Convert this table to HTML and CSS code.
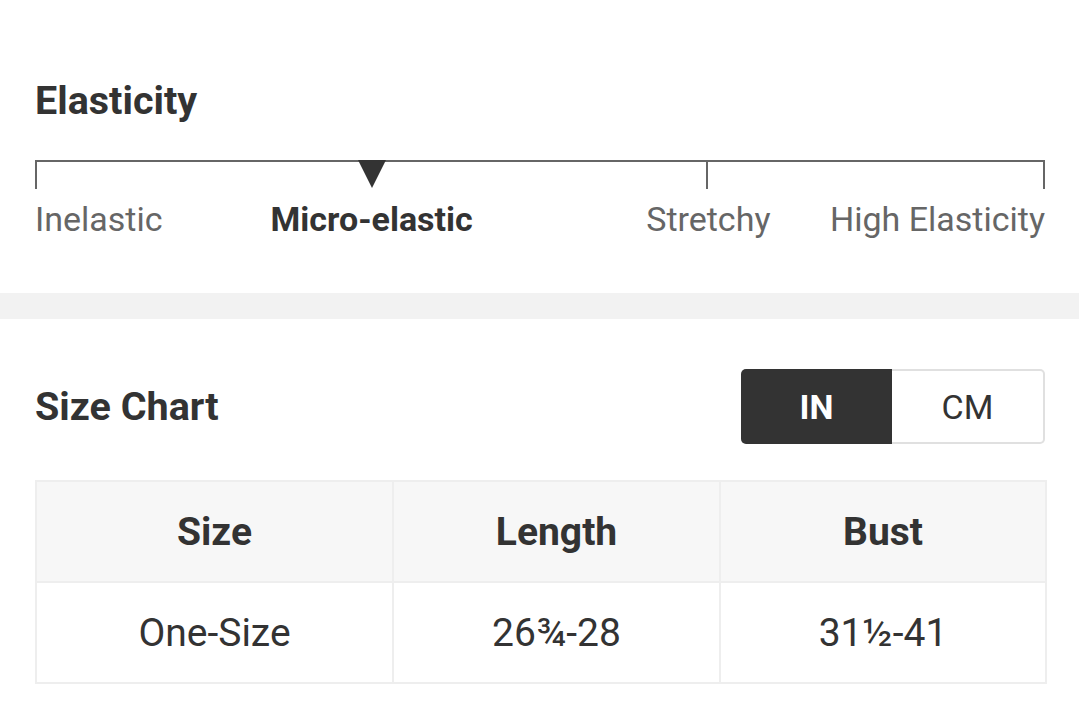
FILE: index.html
```html
<!DOCTYPE html>
<html>
<head>
<meta charset="utf-8">
<link rel="stylesheet" href="styles.css">
</head>
<body>
<section class="elasticity">
  <h2 class="title">Elasticity</h2>
  <div class="scale">
    <div class="seg seg-first"></div>
    <div class="seg seg-mid"><span class="pointer"></span></div>
    <div class="seg seg-last"></div>
  </div>
  <div class="labels">
    <span class="lbl lbl-start">Inelastic</span>
    <span class="lbl lbl-mid1 active">Micro-elastic</span>
    <span class="lbl lbl-mid2">Stretchy</span>
    <span class="lbl lbl-end">High Elasticity</span>
  </div>
</section>
<div class="divider"></div>
<section class="sizes">
  <div class="sizes-head">
    <h2 class="title">Size Chart</h2>
    <div class="toggle">
      <button class="tg tg-on">IN</button>
      <button class="tg">CM</button>
    </div>
  </div>
  <table class="chart">
    <colgroup>
      <col class="c1"><col class="c2"><col class="c3">
    </colgroup>
    <thead>
      <tr><th>Size</th><th>Length</th><th>Bust</th></tr>
    </thead>
    <tbody>
      <tr><td>One-Size</td><td>26¾-28</td><td>31½-41</td></tr>
    </tbody>
  </table>
</section>
</body>
</html>
```

FILE: styles.css
```css
* { box-sizing: border-box; }
html, body { margin: 0; padding: 0; background: #fff; }
body {
  font-family: Roboto, "Noto Sans", "Liberation Sans", sans-serif;
  color: #333;
  width: 1079px;
}
.title {
  margin: 0;
  font-size: 39.5px;
  font-weight: 700;
  line-height: 46px;
  color: #333;
}
.elasticity {
  padding: 78px 34px 54px 35px;
}
.scale {
  display: flex;
  margin-top: 36px;
  height: 29px;
  border-top: 2px solid #666;
}
.seg { flex: 1 1 0; position: relative; }
.seg-first { border-left: 2px solid #666; }
.seg-last { border-left: 2px solid #666; border-right: 2px solid #666; }
.pointer {
  position: absolute;
  top: -2px;
  left: -14px;
  width: 0;
  height: 0;
  border-left: 14px solid transparent;
  border-right: 14px solid transparent;
  border-top: 28px solid #333;
}
.labels {
  display: grid;
  grid-template-columns: repeat(6, minmax(0, 1fr));
  margin-top: 10px;
  font-size: 34px;
  line-height: 40px;
  color: #666;
}
.lbl { white-space: nowrap; }
.lbl-start { grid-column: 1; justify-self: start; }
.lbl-mid1 { grid-column: 2 / span 2; justify-self: center; }
.lbl-mid2 { grid-column: 4 / span 2; justify-self: center; }
.lbl-end { grid-column: 6; justify-self: end; }
.lbl.active { color: #333; font-weight: 700; }
.divider {
  height: 26px;
  background: #f2f2f2;
}
.sizes {
  padding: 50px 34px 30px 35px;
}
.sizes-head {
  display: flex;
  align-items: center;
  justify-content: space-between;
}
.toggle {
  display: flex;
  width: 304px;
  height: 75px;
}
.tg {
  flex: 1 1 0;
  font-family: inherit;
  font-size: 34px;
  background: #fff;
  color: #333;
  border: 2px solid #e0e0e0;
  border-left: none;
  border-radius: 0 5px 5px 0;
  padding: 0;
}
.tg-on {
  background: #333;
  color: #fff;
  font-weight: 700;
  border: none;
  border-radius: 5px 0 0 5px;
}
.chart {
  margin-top: 36px;
  width: 1010px;
  border-collapse: collapse;
  table-layout: fixed;
}
.c1 { width: 357px; }
.c2 { width: 327px; }
.c3 { width: 326px; }
.chart th, .chart td {
  border: 2px solid #eee;
  text-align: center;
  height: 101px;
  font-size: 39px;
  padding: 0;
  color: #333;
}
.chart th { background: #f7f7f7; font-weight: 700; }
.chart td { font-weight: 400; }
```
